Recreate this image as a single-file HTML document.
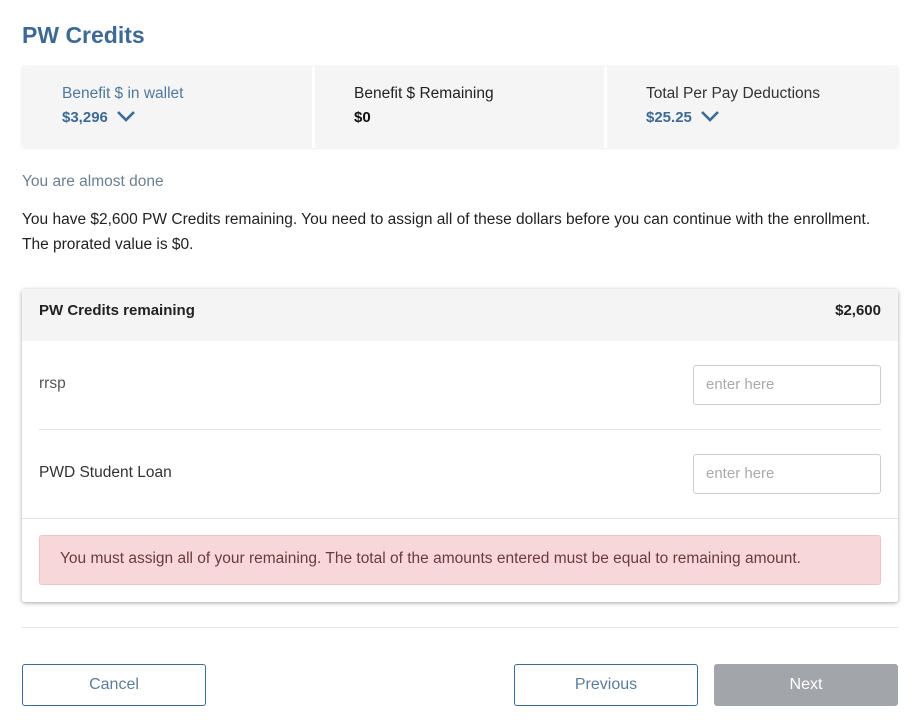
<!DOCTYPE html>
<html><head><style>
*{box-sizing:border-box;margin:0;padding:0}
body{width:922px;height:727px;background:#fff;font-family:"Liberation Sans",sans-serif;color:#333;position:relative;overflow:hidden}
.a{position:absolute}
h1{position:absolute;left:22px;top:22px;font-size:23px;font-weight:bold;color:#3d6a94}
.sum{left:22px;top:67px;width:876px;height:81px;background:#f5f5f5;border-radius:3px;box-shadow:0 0 3px rgba(0,0,0,.12)}
.sum .c{position:absolute;top:0;height:81px}
.lbl{font-size:15.5px;position:absolute;top:18px}
.val{font-size:15px;font-weight:bold;position:absolute;top:42px}
.chev{display:inline-block;vertical-align:middle;margin-left:8px;margin-top:-4px}
.card{left:22px;top:289px;width:876px;height:313px;box-shadow:0 1px 4px rgba(0,0,0,.35);border-radius:3px;background:#fff}
.inp{position:absolute;width:188px;height:40px;border:1px solid #ccc;border-radius:3px;font-size:15px;color:#aaa;padding:10px 12px}
.btn{position:absolute;top:664px;width:184px;height:42px;border:1px solid #3d6a94;border-radius:3px;font-size:16px;color:#5c7d9c;text-align:center;line-height:40px}
</style></head><body>
<h1>PW Credits</h1>
<div class="a sum">
 <div class="c" style="left:0;width:290px"><div class="lbl" style="left:40px;color:#4f789c">Benefit $ in wallet</div><div class="val" style="left:40px;color:#3d6a94">$3,296<svg class="chev" width="20" height="12" viewBox="0 0 20 12"><path d="M2 2l8 8 8-8" stroke="#3d6a94" stroke-width="2.6" fill="none"/></svg></div></div>
 <div class="c" style="left:290px;width:3px;background:#fff"></div>
 <div class="c" style="left:293px;width:290px"><div class="lbl" style="left:39px;color:#222">Benefit $ Remaining</div><div class="val" style="left:39px;color:#111">$0</div></div>
 <div class="c" style="left:582px;width:3px;background:#fff"></div>
 <div class="c" style="left:585px;width:290px"><div class="lbl" style="left:39px;color:#333">Total Per Pay Deductions</div><div class="val" style="left:39px;color:#3d6a94">$25.25<svg class="chev" width="20" height="12" viewBox="0 0 20 12"><path d="M2 2l8 8 8-8" stroke="#3d6a94" stroke-width="2.6" fill="none"/></svg></div></div>
</div>
<div class="a" style="left:22px;top:173px;font-size:15.5px;color:#6c8090">You are almost done</div>
<div class="a" style="left:22px;top:207px;font-size:15.5px;color:#222;line-height:25px;width:890px">You have $2,600 PW Credits remaining. You need to assign all of these dollars before you can continue with the enrollment.<br>The prorated value is $0.</div>
<div class="a card">
 <div class="a" style="left:0;top:0;width:876px;height:52px;background:#f4f4f4"></div>
 <div class="a" style="left:17px;top:13px;font-size:15px;font-weight:bold;color:#222">PW Credits remaining</div>
 <div class="a" style="right:17px;top:13px;font-size:15px;font-weight:bold;color:#222">$2,600</div>
 <div class="a" style="left:17px;top:86px;font-size:15.5px;color:#555">rrsp</div>
 <div class="inp" style="left:671px;top:76px">enter here</div>
 <div class="a" style="left:17px;top:140px;width:842px;height:1px;background:#e3e3e3"></div>
 <div class="a" style="left:17px;top:175px;font-size:15.5px;color:#333">PWD Student Loan</div>
 <div class="inp" style="left:671px;top:165px">enter here</div>
 <div class="a" style="left:0;top:229px;width:876px;height:1px;background:#e3e3e3"></div>
 <div class="a" style="left:17px;top:246px;width:842px;height:50px;background:#f8d7da;border:1px solid #f3c2c7;border-radius:3px;font-size:15.5px;color:#6a3a3e;padding:14px 20px">You must assign all of your remaining. The total of the amounts entered must be equal to remaining amount.</div>
</div>
<div class="a" style="left:22px;top:627px;width:876px;height:1px;background:#e3e3e3"></div>
<div class="btn" style="left:22px">Cancel</div>
<div class="btn" style="left:514px">Previous</div>
<div class="btn" style="left:714px;background:#a2a6ab;border-color:#a2a6ab;color:#fff">Next</div>
</body></html>
